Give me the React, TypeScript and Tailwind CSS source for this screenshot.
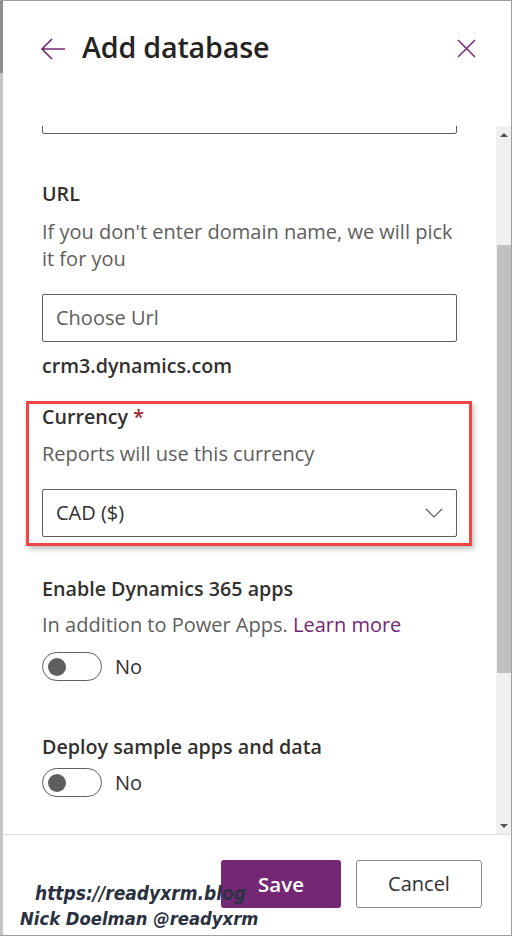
import React from "react";

function Toggle() {
  return (
    <div className="flex items-center gap-[13px]">
      <div className="w-[60px] h-[29px] rounded-full border border-[#605e5c] flex items-center pl-[5px]">
        <div className="w-[18px] h-[18px] rounded-full bg-[#605e5c]" />
      </div>
      <span className="text-[20px] leading-[24px] text-[#323130]">No</span>
    </div>
  );
}

export default function App() {
  return (
    <div className="w-[512px] h-[936px] bg-white flex relative overflow-hidden border-t border-r border-b border-[#a0a0a0] font-['Open_Sans',sans-serif] text-[#323130]">
      {/* left strip */}
      <div className="w-[3px] flex flex-col bg-[#c6c6c6]">
        <div className="h-[72px] bg-[#8d8d8d]" />
      </div>
      <div className="flex-1 flex flex-col min-w-0">
        {/* header */}
        <div className="h-[125px] flex items-start pt-[26px] pl-[37px] pr-[35px]">
          <svg width="26" height="24" viewBox="0 0 26 24" className="mt-[10px]">
            <path d="M25 12 H2 M12 2 L2 12 L12 22" fill="none" stroke="#742774" strokeWidth="1.6" />
          </svg>
          <h1 className="ml-[16px] text-[28.7px] leading-[40px] font-semibold tracking-[-0.2px] text-[#252423]">Add database</h1>
          <div className="flex-1" />
          <svg width="19" height="19" viewBox="0 0 19 19" className="mt-[12px]">
            <path d="M1 1 L18 18 M18 1 L1 18" fill="none" stroke="#742774" strokeWidth="1.5" />
          </svg>
        </div>
        {/* scroll area */}
        <div className="h-[708px] flex overflow-hidden">
          <div className="flex-1 overflow-hidden pl-[39px] pr-[39px]">
            <div className="mt-[-40px] h-[48px] rounded-[2px] border border-[#605e5c]" />
            <div className="mt-[48px] text-[19.7px] leading-[24px] font-semibold">URL</div>
            <div className="mt-[12px] text-[20px] leading-[27px] text-[#605e5c]">
              If you don't enter domain name, we will pick it for you
            </div>
            <div className="mt-[22px] h-[48px] rounded-[2px] border border-[#605e5c] flex items-center px-[13px] text-[20px] text-[#605e5c]">
              Choose Url
            </div>
            <div className="mt-[12px] text-[19.7px] leading-[24px] font-semibold">crm3.dynamics.com</div>
            <div className="mt-[23px] -ml-[16px] -mr-[15px] border-[3px] border-[#f24646] pl-[13px] pr-[12px] pt-[1px] pb-[6px] shadow-[2px_3px_5px_rgba(0,0,0,0.25)]">
              <div className="text-[19.7px] leading-[24px] font-semibold">
                Currency <span className="text-[#a4262c]">*</span>
              </div>
              <div className="mt-[11px] text-[20px] leading-[27px] text-[#605e5c]">Reports will use this currency</div>
              <div className="mt-[22px] h-[48px] rounded-[2px] border border-[#605e5c] flex items-center pl-[13px] pr-[13px] text-[20px] text-[#323130]">
                <span className="flex-1">CAD ($)</span>
                <svg width="18" height="10" viewBox="0 0 18 10">
                  <path d="M1 1 L9 9 L17 1" fill="none" stroke="#605e5c" strokeWidth="1.2" />
                </svg>
              </div>
            </div>
            <div className="mt-[31px] text-[19.7px] leading-[24px] font-semibold">Enable Dynamics 365 apps</div>
            <div className="mt-[10px] text-[20px] leading-[27px] text-[#605e5c]">
              In addition to Power Apps. <span className="text-[#742774]">Learn more</span>
            </div>
            <div className="mt-[14px]">
              <Toggle />
            </div>
            <div className="mt-[54px] text-[19.7px] leading-[24px] font-semibold">Deploy sample apps and data</div>
            <div className="mt-[9px]">
              <Toggle />
            </div>
          </div>
          {/* scrollbar */}
          <div className="w-[15px] bg-[#f0f0f0] flex flex-col items-center">
            <div className="h-[17px] flex items-center justify-center">
              <div className="w-0 h-0 border-l-[4px] border-r-[4px] border-b-[4px] border-l-transparent border-r-transparent border-b-[#505050]" />
            </div>
            <div className="mt-[102px] h-[428px] w-[14px] ml-[1px] bg-[#c1c1c1]" />
            <div className="flex-1" />
            <div className="h-[17px] flex items-center justify-center">
              <div className="w-0 h-0 border-l-[4px] border-r-[4px] border-t-[4px] border-l-transparent border-r-transparent border-t-[#505050]" />
            </div>
          </div>
        </div>
        {/* footer */}
        <div className="flex-1 border-t border-[#e1dfdd] flex justify-end items-start pt-[25px] pr-[29px] gap-[15px]">
          <button className="w-[120px] h-[48px] rounded-[3px] bg-[#742774] text-white text-[20.5px] font-semibold">Save</button>
          <button className="w-[126px] h-[48px] rounded-[3px] border border-[#8a8886] bg-white text-[20px] text-[#323130]">Cancel</button>
        </div>
      </div>
      {/* watermark */}
      <div className="absolute left-[35px] top-[880px] text-[19px] leading-[24px] italic font-bold text-[#2a3242] font-['DejaVu_Sans_Condensed','DejaVu_Sans',sans-serif]">
        https://readyxrm.blog
      </div>
      <div className="absolute left-[20px] top-[906px] text-[18.3px] leading-[24px] italic font-bold text-[#2a3242] font-['DejaVu_Sans_Condensed','DejaVu_Sans',sans-serif]">
        Nick Doelman @readyxrm
      </div>
    </div>
  );
}
